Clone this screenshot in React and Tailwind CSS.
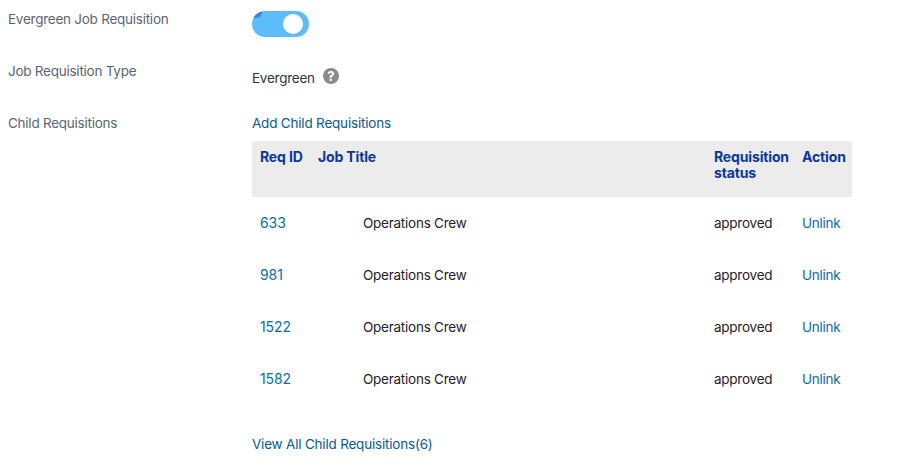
import React from "react";

const rows = ["633", "981", "1522", "1582"];

function Field({ label, children, className }) {
  return (
    <div className={`flex ${className}`}>
      <div className="w-[252px] shrink-0 pl-2 leading-[16px] text-[#5b6670]">{label}</div>
      <div className="flex-1">{children}</div>
    </div>
  );
}

export default function App() {
  return (
    <div className="w-[899px] h-[468px] overflow-hidden bg-white font-['Inter',sans-serif] text-[13.5px] tracking-[-0.25px]">
      <Field label="Evergreen Job Requisition" className="pt-[11px]">
        <div className="relative h-[26px] w-[57px] overflow-hidden rounded-[13px] bg-[#5ebcf9]">
          <div className="absolute left-0 top-0 h-[7px] w-[10px] rounded-br-[6px] bg-[#3d83f0]" />
          <div className="absolute right-[6px] top-[3px] h-[20px] w-[20px] rounded-full bg-white" />
        </div>
      </Field>
      <Field label="Job Requisition Type" className="mt-[26px]">
        <div className="flex items-center pt-[7px] leading-[16px] text-[#32363a]">
          <span>Evergreen</span>
          <span className="ml-[8px] -mt-[5px] flex h-[16px] w-[16px] items-center justify-center rounded-full bg-[#8a8a8a] text-[13px] font-bold text-white">?</span>
        </div>
      </Field>
      <Field label="Child Requisitions" className="mt-[29px]">
        <a className="block leading-[16px] tracking-[-0.2px] text-[#0a5c8c]">Add Child Requisitions</a>
        <div className="mt-[10px] w-[600px]">
          <div className="flex h-[56px] bg-[#ececec] px-2 pt-[8px] text-[14px] font-bold leading-[16px] tracking-[-0.15px] text-[#0a369d]">
            <div className="w-[58px] shrink-0">Req ID</div>
            <div className="w-[396px] shrink-0">Job Title</div>
            <div className="w-[88px] shrink-0">Requisition status</div>
            <div>Action</div>
          </div>
          {rows.map((id) => (
            <div key={id} className="flex h-[52px] items-center px-2 leading-[16px]">
              <div className="w-[103px] shrink-0 text-[14px] tracking-[-0.1px] text-[#0a6ea6]">{id}</div>
              <div className="w-[351px] shrink-0 text-[#1f2326]">Operations Crew</div>
              <div className="w-[88px] shrink-0 text-[#1f2326]">approved</div>
              <div className="text-[#0a6ea6]">Unlink</div>
            </div>
          ))}
        </div>
        <a className="mt-[31px] block leading-[16px] tracking-[-0.2px] text-[#0a5c8c]">View All Child Requisitions(6)</a>
      </Field>
    </div>
  );
}
